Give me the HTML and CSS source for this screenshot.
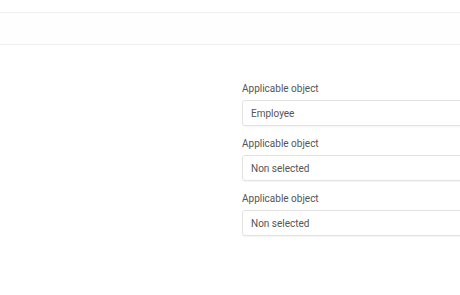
FILE: index.html
```html
<!DOCTYPE html>
<html lang="en">
<head>
    <meta charset="UTF-8">
    <meta name="viewport" content="width=device-width, initial-scale=1.0">
    <title>Applicable object</title>
    <link rel="stylesheet" href="styles.css">
</head>
<body>
    <div class="toolbar"></div>
    <div class="content">
        <div class="side"></div>
        <div class="form">
            <div class="field">
                <label class="field-label">Applicable object</label>
                <div class="select">Employee</div>
            </div>
            <div class="field">
                <label class="field-label">Applicable object</label>
                <div class="select">Non selected</div>
            </div>
            <div class="field">
                <label class="field-label">Applicable object</label>
                <div class="select">Non selected</div>
            </div>
        </div>
    </div>
</body>
</html>
```

FILE: styles.css
```css
body{
    margin: 0;
    padding-top: 12px;
    background-color: #ffffff;
    font-family: Roboto, "Liberation Sans", Arial, sans-serif;
}
.toolbar{
    height: 31px;
    border-top: 1px solid #f0f0f0;
    border-bottom: 1px solid #f0f0f0;
    background-color: #fefefe;
}
.content{
    display: grid;
    grid-template-columns: 242px 1fr;
    padding-top: 37px;
    overflow: hidden;
}
.field{
    display: flex;
    flex-direction: column;
    margin-bottom: 11px;
}
.field-label{
    font-size: 10px;
    line-height: 14px;
    color: #555;
    margin-bottom: 4px;
}
.select{
    box-sizing: border-box;
    height: 26px;
    margin-right: -10px;
    padding: 0 8px;
    border: 1px solid #e2e2e2;
    border-radius: 3px;
    font-size: 10px;
    line-height: 25px;
    color: #555;
    box-shadow: 0 1px 1px rgba(0,0,0,0.04);
}
```
